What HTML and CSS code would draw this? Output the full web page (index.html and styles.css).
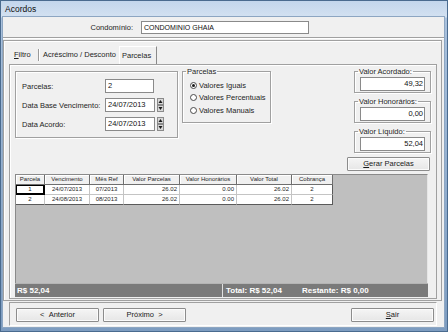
FILE: index.html
```html
<!DOCTYPE html>
<html lang="pt-BR">
<head>
<meta charset="utf-8">
<title>Acordos</title>
<link rel="stylesheet" href="styles.css">
</head>
<body>
<div class="window">
  <div class="titlebar">Acordos</div>
  <div class="client">
    <div class="toppanel">
      <span class="cond-label">Condomínio:</span>
      <div class="input cond-input">CONDOMINIO GHAIA</div>
    </div>

    <div class="midpanel">
      <div class="tabs">
        <span class="tab first"><u>F</u>iltro</span>
        <span class="tabsep"></span>
        <span class="tab">Acréscimo / Desconto</span>
        <span class="tab active">Parcelas</span>
      </div>

      <div class="page">
        <div class="upper">
          <div class="fieldsbox">
            <span class="lbl">Parcelas:</span>
            <div class="input num-input">2</div>
            <span class="lbl">Data Base Vencimento:</span>
            <div class="date">
              <div class="input date-input">24/07/2013</div>
              <svg class="spin" width="7" height="14" viewBox="0 0 7 14">
                <rect x="0.5" y="0.5" width="6" height="6" fill="#d8d8d8" stroke="#8a8a8a"/>
                <rect x="0.5" y="7.5" width="6" height="6" fill="#d8d8d8" stroke="#8a8a8a"/>
                <polygon points="1.5,5 5.5,5 3.5,2" fill="#1a1a1a"/>
                <polygon points="1.5,9 5.5,9 3.5,12" fill="#1a1a1a"/>
              </svg>
            </div>
            <span class="lbl">Data Acordo:</span>
            <div class="date">
              <div class="input date-input">24/07/2013</div>
              <svg class="spin" width="7" height="14" viewBox="0 0 7 14">
                <rect x="0.5" y="0.5" width="6" height="6" fill="#d8d8d8" stroke="#8a8a8a"/>
                <rect x="0.5" y="7.5" width="6" height="6" fill="#d8d8d8" stroke="#8a8a8a"/>
                <polygon points="1.5,5 5.5,5 3.5,2" fill="#1a1a1a"/>
                <polygon points="1.5,9 5.5,9 3.5,12" fill="#1a1a1a"/>
              </svg>
            </div>
          </div>

          <fieldset class="group radios">
            <legend>Parcelas</legend>
            <div class="radio"><span class="dot checked"></span>Valores Iguais</div>
            <div class="radio"><span class="dot"></span>Valores Percentuais</div>
            <div class="radio"><span class="dot"></span>Valores Manuais</div>
          </fieldset>

          <div class="rightcol">
            <fieldset class="group val">
              <legend>Valor Acordado:</legend>
              <div class="input val-input">49,32</div>
            </fieldset>
            <fieldset class="group val">
              <legend>Valor Honorários:</legend>
              <div class="input val-input">0,00</div>
            </fieldset>
            <fieldset class="group val">
              <legend>Valor Líquido:</legend>
              <div class="input val-input">52,04</div>
            </fieldset>
            <button class="btn gerar"><u>G</u>erar Parcelas</button>
          </div>
        </div>

        <div class="grid">
          <table>
            <colgroup>
              <col class="c1"><col class="c2"><col class="c3"><col class="c4"><col class="c5"><col class="c6"><col class="c7">
            </colgroup>
            <thead>
              <tr>
                <th>Parcela</th><th>Vencimento</th><th>Mês Ref</th><th>Valor Parcelas</th><th>Valor Honorários</th><th>Valor Total</th><th>Cobrança</th>
              </tr>
            </thead>
            <tbody>
              <tr>
                <td class="ctr focus">1</td><td class="ctr">24/07/2013</td><td class="ctr">07/2013</td><td class="rgt">26.02</td><td class="rgt">0.00</td><td class="rgt">26.02</td><td class="ctr">2</td>
              </tr>
              <tr>
                <td class="ctr">2</td><td class="ctr">24/08/2013</td><td class="ctr">08/2013</td><td class="rgt">26.02</td><td class="rgt">0.00</td><td class="rgt">26.02</td><td class="ctr">2</td>
              </tr>
            </tbody>
          </table>
        </div>

        <div class="status">
          <span class="st-left">R$ 52,04</span>
          <span class="st-total">Total: R$ 52,04</span>
          <span class="st-rest">Restante: R$ 0,00</span>
        </div>
      </div>
    </div>

    <div class="bottompanel">
      <button class="btn nav">&lt; &nbsp;Anterior</button>
      <button class="btn nav">Próximo &nbsp;&gt;</button>
      <button class="btn nav sair"><u>S</u>air</button>
    </div>
  </div>
</div>
</body>
</html>
```
FILE: styles.css
```css
* { box-sizing: border-box; }
html, body { margin: 0; padding: 0; }
body {
  width: 448px;
  height: 332px;
  overflow: hidden;
  font-family: "Liberation Sans", Arial, sans-serif;
  font-size: 7.5px;
  color: #1e1e1e;
  background: #6f8fb3;
}
.window {
  width: 448px;
  height: 332px;
  display: flex;
  flex-direction: column;
  border: 1px solid #4a6b8f;
  padding: 0 3px 4px 2px;
  background: linear-gradient(#c3d6ec 0, #d3e1f1 16px, #a9c1dd 17px, #7d9cc0 100%);
}
.titlebar {
  height: 16px;
  line-height: 16px;
  margin: 0 -3px 0 -2px;
  padding-left: 4px;
  font-size: 8.5px;
  color: #0f0f0f;
  flex: none;
}
.client {
  flex: 1;
  background: #f0f0f0;
  display: flex;
  flex-direction: column;
  box-shadow: 0 0 0 1px #8da6c2;
}
.toppanel {
  height: 21px;
  flex: none;
  display: flex;
  align-items: center;
  border-bottom: 1px solid #a0a0a0;
  box-shadow: 0 1px 0 #ffffff;
}
.cond-label {
  width: 130px;
  text-align: right;
  margin-right: 8px;
}
.input {
  background: #fff;
  border: 1px solid #8a8a8a;
  height: 14px;
  line-height: 12px;
  padding: 0 2px;
  white-space: nowrap;
  overflow: hidden;
  color: #111;
}
.cond-input {
  width: 168px;
  height: 13px;
  line-height: 11px;
  font-size: 7px;
}
.midpanel {
  margin: 2px 2px 0 0;
  height: 261px;
  flex: none;
  border: 1px solid #a0a0a0;
  box-shadow: inset 1px 1px 0 #fff;
  padding: 0 4px 1px 5px;
  display: flex;
  flex-direction: column;
}
.tabs {
  height: 23px;
  flex: none;
  display: flex;
  align-items: flex-end;
}
.tab {
  height: 18px;
  line-height: 18px;
  padding: 0 3px;
}
.tab.first { padding: 0 5px; width: 29px; }
.tabsep {
  width: 2px;
  height: 12px;
  margin: 0 0 3px 0;
  border-left: 1px solid #9a9a9a;
  border-right: 1px solid #fff;
}
.tab.active {
  padding: 0 5px 0 2px;
  border-left: 1px solid #fff;
  border-top: 1px solid #fff;
  border-right: 1px solid #8a8a8a;
  line-height: 17px;
}
.page {
  flex: 1;
  border: 1px solid #a0a0a0;
  box-shadow: inset 1px 1px 0 #fff;
  padding: 2px 5px 0 5px;
  display: flex;
  flex-direction: column;
}
.upper {
  display: flex;
  align-items: flex-start;
  height: 104px;
  flex: none;
}
.fieldsbox {
  margin-top: 4px;
  width: 163px;
  height: 67px;
  border: 1px solid #a0a0a0;
  box-shadow: inset 1px 1px 0 #fff, 1px 1px 0 #fff;
  padding: 7px 0 0 6px;
  display: grid;
  grid-template-columns: 83px auto;
  grid-auto-rows: 14px;
  row-gap: 5px;
  align-items: center;
}
.num-input { width: 49px; }
.date { display: flex; align-items: center; gap: 2px; }
.date-input { width: 50px; }
.spin { display: block; }
.group {
  margin: 0;
  border: 1px solid #a0a0a0;
  box-shadow: inset 1px 1px 0 #fff, 1px 1px 0 #fff;
  min-width: 0;
}
.group legend {
  font-size: 7.5px;
  line-height: 9px;
  padding: 0 1px;
  margin-left: -2px;
}
.radios {
  margin-left: 4px;
  width: 89px;
  height: 56px;
  padding: 3px 0 0 7px;
}
.radios legend { margin-left: -4px; }
.radio {
  height: 12.5px;
  display: flex;
  align-items: center;
  white-space: nowrap;
}
.dot {
  width: 7px;
  height: 7px;
  border: 1px solid #4a4a4a;
  border-radius: 50%;
  background: #fff;
  margin-right: 2px;
  flex: none;
  display: flex;
  align-items: center;
  justify-content: center;
}
.dot.checked::after {
  content: "";
  width: 3px;
  height: 3px;
  border-radius: 50%;
  background: #1a1a1a;
}
.rightcol {
  margin-left: auto;
  width: 84px;
  display: flex;
  flex-direction: column;
  align-items: flex-end;
  gap: 4px;
}
.val {
  width: 77px;
  height: 26px;
  padding: 1px 5px 1px 5px;
}
.val-input {
  width: 65px;
  text-align: right;
  padding-right: 1px;
}
.btn {
  font-family: "Liberation Sans", Arial, sans-serif;
  font-size: 7.5px;
  color: #1a1a1a;
  width: 83px;
  height: 14px;
  line-height: 12px;
  padding: 0;
  border: 1px solid #8c8c8c;
  border-radius: 1px;
  background: linear-gradient(#f5f5f5, #e6e6e6);
  box-shadow: inset 0 0 0 1px #fbfbfb;
  text-align: center;
}
.gerar { margin-right: 1px; }
.grid {
  margin: 3px 3px 0 0;
  height: 109px;
  flex: none;
  background: #bfbfbf;
  border: 1px solid #8a8a8a;
  border-right-color: #e6e6e6;
  border-bottom: none;
}
.grid table {
  border-collapse: separate;
  border-spacing: 0;
  table-layout: fixed;
  width: 317px;
  font-size: 6px;
}
.c1 { width: 29px; }
.c2 { width: 45px; }
.c3 { width: 34px; }
.c4 { width: 56px; }
.c5 { width: 57px; }
.c6 { width: 55px; }
.c7 { width: 41px; }
.grid th {
  font-weight: normal;
  height: 10px;
  line-height: 9px;
  padding: 0;
  background: #f0f0f0;
  border-right: 1px solid #6e6e6e;
  border-bottom: 1px solid #6e6e6e;
  box-shadow: inset 1px 1px 0 #fff;
  text-align: center;
  white-space: nowrap;
  overflow: hidden;
}
.grid td {
  height: 10px;
  line-height: 9px;
  padding: 0 2px;
  background: #fff;
  border-right: 1px solid #c4c4c4;
  border-bottom: 1px solid #c4c4c4;
  white-space: nowrap;
  overflow: hidden;
}
.grid td:last-child { border-right-color: #5a5a5a; }
.grid tbody tr:last-child td { border-bottom-color: #5a5a5a; }
.ctr { text-align: center; }
.rgt { text-align: right; }
.grid td.focus {
  border-right-color: #000;
  border-bottom-color: #000;
  box-shadow: inset 1px 1px 0 #000, inset -1px -1px 0 #000;
}
.status {
  margin-right: 3px;
  height: 14px;
  flex: none;
  display: flex;
  background: #7a7a7a;
  border-top: 1px solid #b4b4b4;
  color: #fff;
  font-weight: bold;
  font-size: 8px;
  line-height: 13px;
}
.st-left {
  width: 208px;
  padding-left: 2px;
  border-right: 1px solid #e0e0e0;
}
.st-total {
  width: 79px;
  padding-left: 3px;
}
.bottompanel {
  margin: 1px 7px 0 6px;
  height: 24px;
  flex: none;
  border-top: 1px solid #a0a0a0;
  border-left: 1px solid #a0a0a0;
  border-right: 1px solid #fff;
  border-bottom: 1px solid #fff;
  padding: 5px 2px 0 6px;
  display: flex;
  align-items: flex-start;
  gap: 4px;
}
.sair { margin-left: auto; }
```
